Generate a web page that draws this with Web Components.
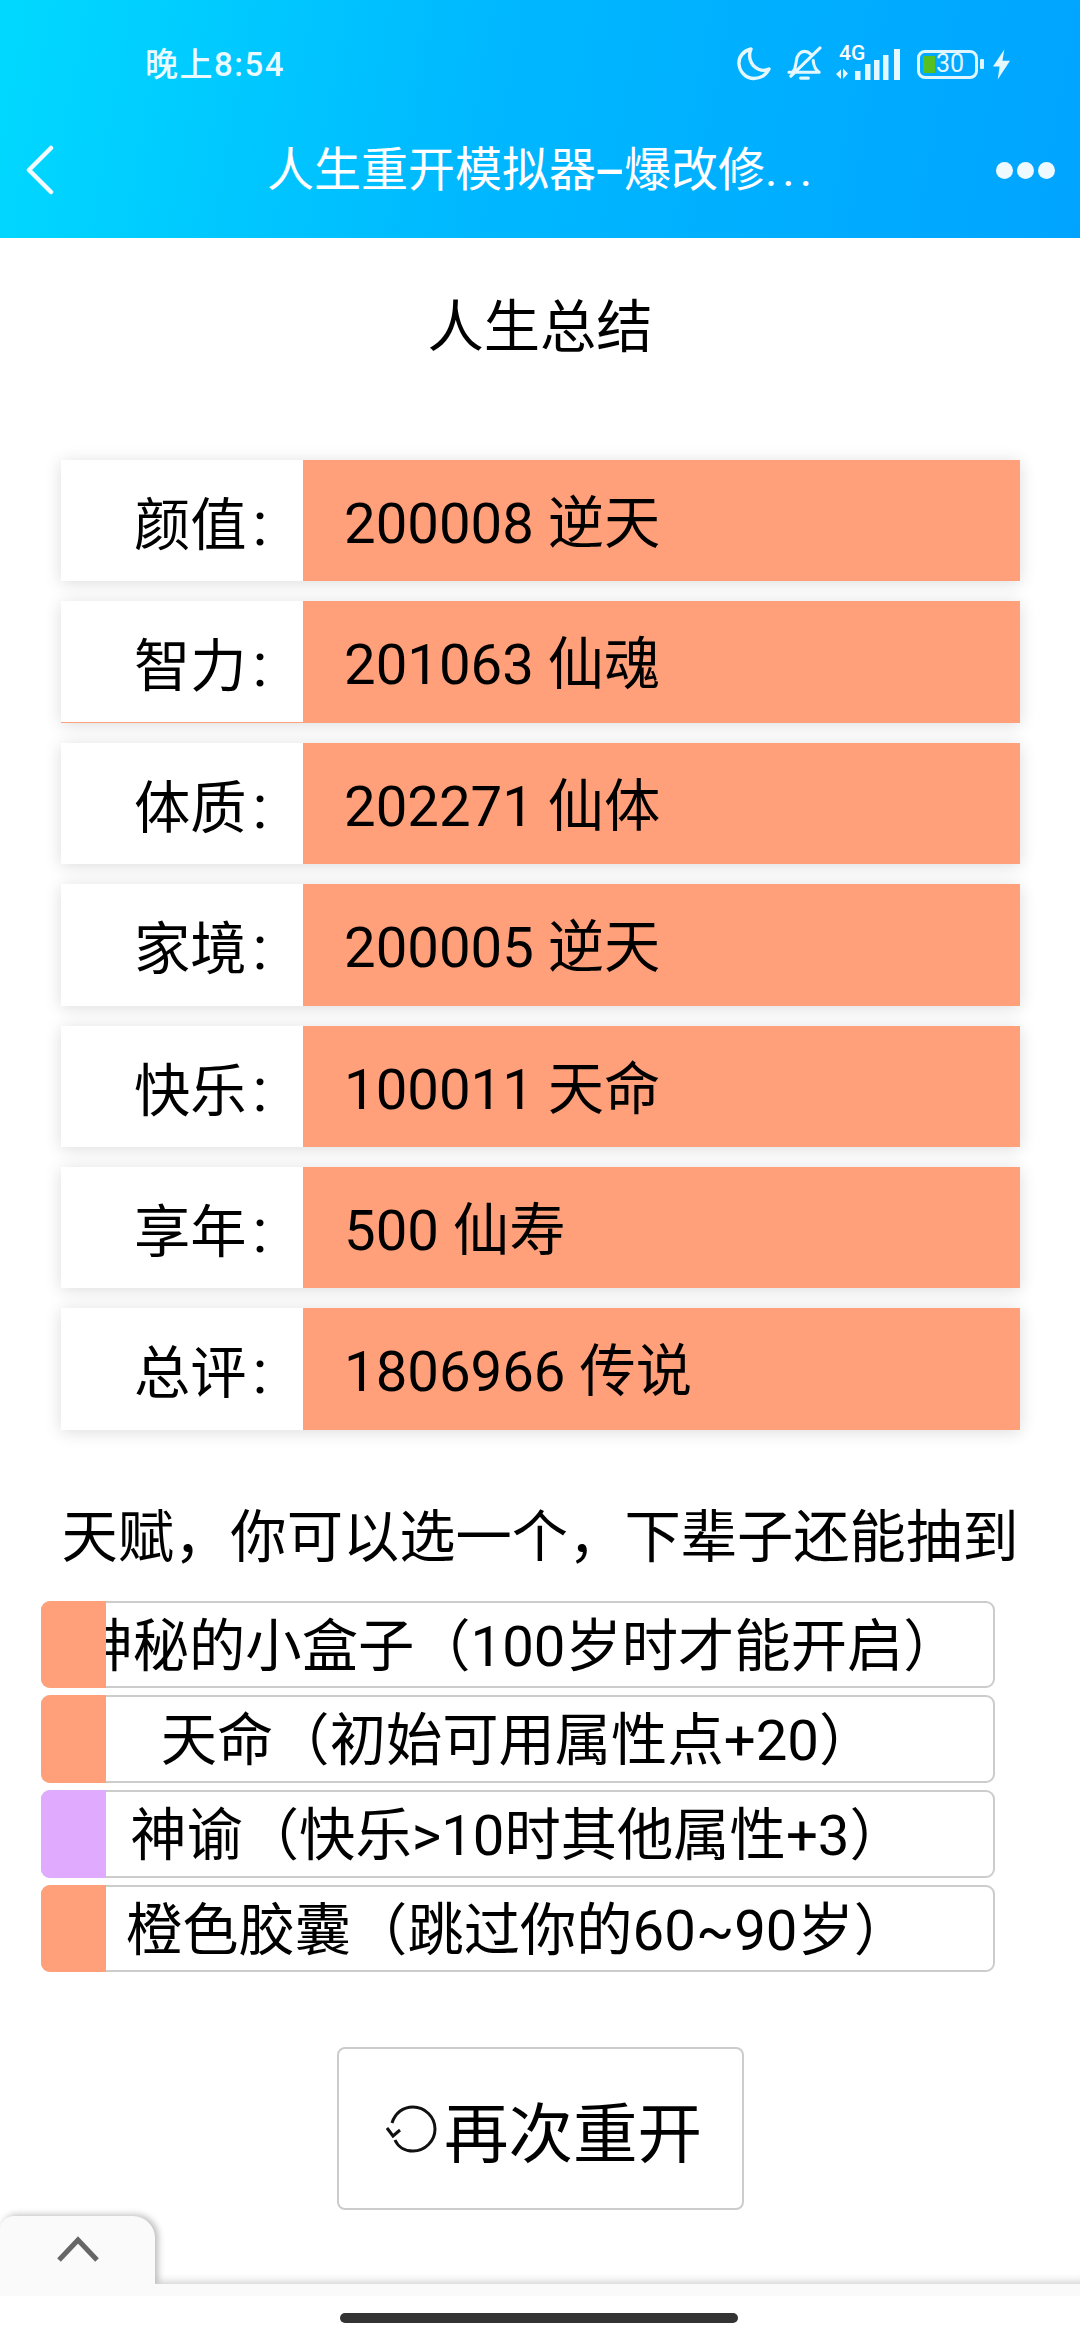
<!DOCTYPE html>
<html lang="zh">
<head>
<meta charset="utf-8">
<title>人生重开模拟器</title>
<style>
  html, body { margin: 0; padding: 0; background: #fff; }
  body { font-family: Roboto, "Noto Sans CJK SC", sans-serif; color: #000; }
</style>
</head>
<body>
<life-app>
  <app-header></app-header>
  <summary-panel>
    <stat-row label="颜值" value="200008 逆天"></stat-row>
    <stat-row label="智力" value="201063 仙魂" hairline></stat-row>
    <stat-row label="体质" value="202271 仙体"></stat-row>
    <stat-row label="家境" value="200005 逆天"></stat-row>
    <stat-row label="快乐" value="100011 天命"></stat-row>
    <stat-row label="享年" value="500 仙寿"></stat-row>
    <stat-row label="总评" value="1806966 传说"></stat-row>
  </summary-panel>
  <talent-list>
    <talent-item>神秘的小盒子（100岁时才能开启）</talent-item>
    <talent-item>天命（初始可用属性点+20）</talent-item>
    <talent-item tone="purple">神谕（快乐&gt;10时其他属性+3）</talent-item>
    <talent-item>橙色胶囊（跳过你的60~90岁）</talent-item>
  </talent-list>
  <restart-button>再次重开</restart-button>
  <bottom-drawer></bottom-drawer>
</life-app>

<script>
  function define(name, html) {
    customElements.define(name, class extends HTMLElement {
      connectedCallback() {
        let markup = html;
        for (const attr of this.getAttributeNames()) {
          markup = markup.replaceAll("{{" + attr + "}}", this.getAttribute(attr));
        }
        this.attachShadow({ mode: "open" }).innerHTML = markup;
      }
    });
  }

  define("life-app", `
    <style>
      :host { display: flex; flex-direction: column; width: 1080px; height: 2340px; overflow: hidden; background: #fff; }
    </style>
    <slot></slot>`);

  define("app-header", `
    <style>
      :host { display: block; height: 238px; flex: none; color: #fff; background: linear-gradient(100deg, #00d9ff 0%, #00b8ff 45%, #00a4ff 100%); }
      .status { display: flex; align-items: center; height: 130px; box-sizing: border-box; padding: 0 70px 0 145px; }
      .time { font-size: 33px; font-weight: 500; letter-spacing: 1.5px; opacity: .92; margin-top: -6px; }
      .icons { margin-left: auto; display: flex; align-items: center; margin-top: -2px; }
      svg { display: block; }
      .moon { margin-right: 16px; }
      .net { position: relative; width: 66px; height: 34px; margin: 0 15px 0 14px; }
      .net span { position: absolute; left: 3px; top: -5px; font-size: 21px; font-weight: 500; line-height: 22px; }
      .batt { position: relative; width: 61px; height: 29px; box-sizing: border-box; border: 3.5px solid #dff6ff; border-radius: 8px; overflow: hidden; font-size: 25px; line-height: 22px; }
      .batt i { position: absolute; left: 3px; top: 3px; bottom: 3px; width: 12px; background: #55c01f; }
      .batt span { position: absolute; left: 16px; top: 0; color: #e4f7ff; }
      .nub { width: 4px; height: 10px; background: #dff6ff; margin: 0 9px 0 2px; border-radius: 1px; }
      .nav { display: flex; align-items: center; height: 80px; padding: 0 25px 0 26px; }
      .title { flex: 1; text-align: center; font-size: 47px; line-height: 80px; white-space: nowrap; padding-left: 34px; }
      .dash { display: inline-block; margin: 0 6px; transform: scaleX(2); font-weight: 500; }
      .more { letter-spacing: 5px; }
      .dots { display: flex; gap: 4px; }
      .dots i { width: 17px; height: 17px; border-radius: 50%; background: #eefaff; }
    </style>
    <div class="status">
      <span class="time">晚上8:54</span>
      <div class="icons">
        <svg class="moon" width="34" height="34" viewBox="1 1 34 34" fill="none" stroke="#e6f8ff" stroke-width="3.4" stroke-linejoin="round" stroke-linecap="round"><path d="M15 3C7 5 2.5 11 3 18c.6 8 7 14.5 15 14.5 7 0 12-3.800 15-9.500-3 1.600-7 1.700-10.500.2C15 20 11.500 11 15 3z"/></svg>
        <svg width="35" height="36" viewBox="1 0 36 37" fill="none" stroke="#e6f8ff" stroke-width="3.200" stroke-linejoin="round" stroke-linecap="round"><path d="M7 27c3-4 3-7 3.500-11C11 9 15 5.500 19 5.500c2.400 0 4.500 1 6 2.500M28 15c.5 4 .5 8 6 12H3M35 2 5 31M15 33h8"/></svg>
        <div class="net">
          <span>4G</span>
          <svg width="66" height="34" viewBox="0 0 66 34" fill="#e6f8ff"><path d="M0 27l5-4.500V32zM7 21.500v10.500l5-5.500zM19 24h5.500v9H19zM29 17h5.500v16H29zM38 13h5.500v20H38zM47 8h5.500v25H47zM58 2h6v31h-6z"/></svg>
        </div>
        <div class="batt"><i></i><span>30</span></div>
        <div class="nub"></div>
        <svg width="17" height="31" viewBox="0 0 18 32" fill="#e6f8ff"><path d="M12 0 0 18h7L5 32 18 12h-8z"/></svg>
      </div>
    </div>
    <div class="nav">
      <svg width="28" height="50" viewBox="0 0 28 50" fill="none" stroke="#f2fcff" stroke-width="4.500" stroke-linecap="round" stroke-linejoin="round"><path d="M25 3 3 25l22 22"/></svg>
      <div class="title">人生重开模拟器<span class="dash">-</span>爆改修<span class="more">...</span></div>
      <div class="dots"><i></i><i></i><i></i></div>
    </div>`);

  define("summary-panel", `
    <style>
      :host { display: block; flex: none; }
      h2 { margin: 0; height: 222px; box-sizing: border-box; padding-top: 48px; text-align: center; font-size: 56.3px; line-height: 84px; font-weight: 400; }
      .rows { display: flex; flex-direction: column; gap: 20px; padding: 0 60px 0 61px; }
    </style>
    <h2>人生总结</h2>
    <div class="rows"><slot></slot></div>`);

  define("stat-row", `
    <style>
      :host { display: flex; height: 121.4px; font-size: 56.3px; line-height: 128px; background: #ffa07a; box-shadow: 0 2px 16px rgba(0,0,0,.14); }
      :host(:not([hairline])) .label { height: 100%; }
      :host([hairline]) .label { height: calc(100% - 1px); }
      .label { flex: none; width: 242px; box-sizing: border-box; padding-left: 73px; background: #fff; white-space: nowrap; }
      .colon { font-size: 62px; margin-left: 6px; }
      .value { padding-left: 41px; white-space: nowrap; }
    </style>
    <div class="label">{{label}}<span class="colon">:</span></div>
    <div class="value">{{value}}</div>`);

  define("talent-list", `
    <style>
      :host { display: block; flex: none; }
      h3 { margin: 0; height: 171px; box-sizing: border-box; padding-top: 66px; text-align: center; font-size: 56.3px; line-height: 84px; font-weight: 400; white-space: nowrap; }
      .items { display: flex; flex-direction: column; gap: 7px; padding: 0 85px 0 41px; }
    </style>
    <h3>天赋，你可以选一个，下辈子还能抽到</h3>
    <div class="items"><slot></slot></div>`);

  define("talent-item", `
    <style>
      :host { display: block; position: relative; height: 87.600px; box-sizing: border-box; border: 2px solid #ccc; border-radius: 9px; font-size: 56.3px; line-height: 89px; text-align: center; white-space: nowrap; --tone: #ffa07a; }
      :host([tone="purple"]) { --tone: #e0aaff; }
      .text { display: flex; justify-content: center; height: 83px; }
      .bar { position: absolute; left: -2px; top: -2px; bottom: -2px; width: 65px; background: var(--tone); border-radius: 9px 0 0 9px; }
    </style>
    <div class="text"><span><slot></slot></span></div>
    <div class="bar"></div>`);

  define("restart-button", `
    <style>
      :host { display: flex; flex: none; align-items: center; justify-content: center; box-sizing: border-box; width: 407px; height: 163px; margin: 75px 0 0 337px; border: 2px solid #ccc; border-radius: 8px; font-size: 64.5px; padding-left: 7px; }
      svg { display: block; margin-right: 6px; }
    </style>
    <svg width="52" height="50" viewBox="0 0 52 50" fill="none" stroke="#111" stroke-width="3"><path d="M6 19C9 9 17 3 27 3c12 0 22 10 22 22S39 47 27 47c-8 0-15-4-18-11M1 24l6 8 7-6"/></svg>
    <slot></slot>`);

  define("bottom-drawer", `
    <style>
      :host { display: block; flex: none; margin-top: auto; height: 124px; position: relative; }
      .sheet { height: 68px; position: relative; box-shadow: inset 0 -10px 8px -8px rgba(0,0,0,.2); }
      .tab { position: absolute; left: 0; top: 0; width: 155px; height: 68px; box-sizing: border-box; background: #fafafa; border-radius: 14px 22px 0 0; box-shadow: 3px -1px 7px rgba(0,0,0,.28); display: flex; align-items: center; justify-content: center; }
      .strip { height: 12px; background: #fafafa; position: relative; }
      .nav { height: 44px; position: relative; background: #fff; }
      .pill { position: absolute; left: 340px; top: 17px; width: 398px; height: 10px; border-radius: 5px; background: #333; }
      svg { display: block; margin-top: -2px; }
    </style>
    <div class="sheet"><div class="tab"><svg width="42" height="26" viewBox="0 0 42 26" fill="none" stroke="#666" stroke-width="5"><path d="M2 24 21 4l19 20"/></svg></div></div>
    <div class="strip"></div>
    <div class="nav"><div class="pill"></div></div>`);
</script>
</body>
</html>
